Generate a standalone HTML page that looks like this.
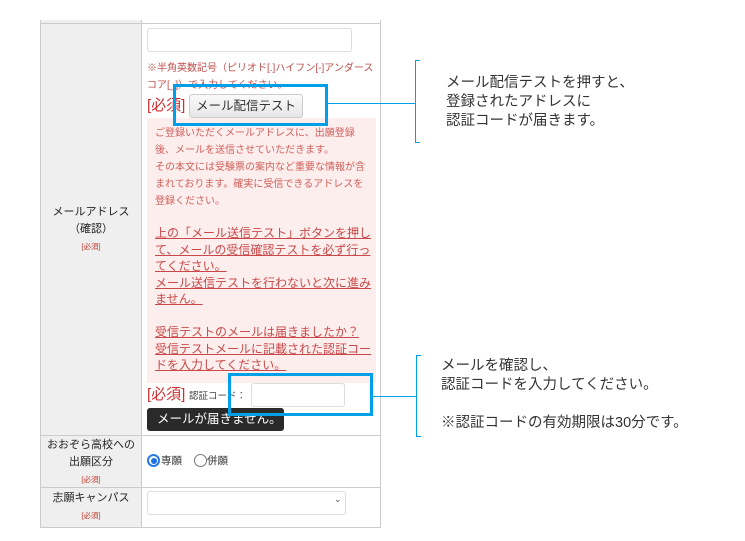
<!DOCTYPE html>
<html><head><meta charset="utf-8"><style>
*{margin:0;padding:0;box-sizing:border-box}
body{width:745px;height:541px;background:#fff;position:relative;overflow:hidden;font-family:"Liberation Sans","Noto Sans CJK JP",sans-serif}
.a{position:absolute}
.red{color:#c0392b}
.u{text-decoration:underline;color:#c9494a}
</style></head><body>
<div class="a" style="left:40px;top:20px;width:102px;height:508px;background:#efefef;border-left:1px solid #ccc;border-right:1px solid #ccc"></div>
<div class="a" style="left:40px;top:23px;width:341px;height:1px;background:#ccc"></div>
<div class="a" style="left:380px;top:20px;width:1px;height:508px;background:#ccc"></div>
<div class="a" style="left:40px;top:435px;width:341px;height:1px;background:#ccc"></div>
<div class="a" style="left:40px;top:487px;width:341px;height:1px;background:#ccc"></div>
<div class="a" style="left:40px;top:527px;width:341px;height:1px;background:#ccc"></div>

<div class="a" style="left:40px;top:204px;width:102px;text-align:center;font-size:11px;line-height:17px;color:#222">メールアドレス<br>（確認）<br><span class="red" style="font-size:7.5px">[必須]</span></div>
<div class="a" style="left:40px;top:437px;width:102px;text-align:center;font-size:11px;line-height:17px;color:#222">おおぞら高校への<br>出願区分<br><span class="red" style="font-size:7.5px">[必須]</span></div>
<div class="a" style="left:40px;top:490px;width:102px;text-align:center;font-size:11px;line-height:17px;color:#222">志願キャンパス<br><span class="red" style="font-size:7.5px">[必須]</span></div>

<div class="a" style="left:147px;top:28px;width:205px;height:24px;border:1px solid #ddd;border-radius:3px"></div>
<div class="a" style="left:147px;top:60px;width:232px;font-size:10px;line-height:17px;color:#c0504d">※半角英数記号（ピリオド[.]ハイフン[-]アンダースコア[_]）で入力してください。</div>
<div class="a red" style="left:147px;top:94px;font-size:15px;color:#d03030">[必須]</div>
<div class="a" style="left:189px;top:94px;width:114px;height:24px;border:1px solid #ccc;border-radius:3px;background:linear-gradient(#fafafa,#e6e6e6);font-size:12.5px;line-height:22px;text-align:center;color:#333">メール配信テスト</div>

<div class="a" style="left:147px;top:118px;width:229px;height:265px;background:#fdeeee"></div>
<div class="a" style="left:155px;top:125px;white-space:nowrap;font-size:10px;line-height:17px;color:#d0605a">ご登録いただくメールアドレスに、出願登録<br>後、メールを送信させていただきます。<br>その本文には受験票の案内など重要な情報が含<br>まれております。確実に受信できるアドレスを<br>登録ください。</div>
<div class="a u" style="left:155px;top:225px;width:220px;font-size:12px;line-height:16.5px">上の「メール送信テスト」ボタンを押して、メールの受信確認テストを必ず行ってください。<br>メール送信テストを行わないと次に進みません。<br><br>受信テストのメールは届きましたか？<br>受信テストメールに記載された認証コードを入力してください。</div>

<div class="a" style="left:147px;top:383px;font-size:15px;color:#d03030">[必須]</div>
<div class="a" style="left:189px;top:388px;font-size:9.5px;color:#444">認証コード：</div>
<div class="a" style="left:251px;top:383px;width:94px;height:24px;border:1px solid #ddd;border-radius:3px"></div>
<div class="a" style="left:147px;top:408px;width:137px;height:23px;background:#2a2a2a;border-radius:3px;color:#fff;font-size:12.5px;line-height:23px;padding-left:10px;white-space:nowrap;overflow:hidden">メールが届きません。</div>

<div class="a" style="left:147px;top:454px;width:13px;height:13px;border:2px solid #2a7ae2;border-radius:50%"><div style="margin:1.5px;width:6px;height:6px;border-radius:50%;background:#1a73e8"></div></div>
<div class="a" style="left:161px;top:453px;font-size:10.5px;color:#333">専願</div>
<div class="a" style="left:194px;top:454px;width:13px;height:13px;border:1px solid #777;border-radius:50%"></div>
<div class="a" style="left:207px;top:453px;font-size:10.5px;color:#333">併願</div>

<div class="a" style="left:147px;top:491px;width:199px;height:24px;border:1px solid #ddd;border-radius:3px"></div>
<div class="a" style="left:334px;top:494px;font-size:9px;color:#555">⌄</div>

<div class="a" style="left:173px;top:84px;width:155px;height:42px;border:3px solid #00a0e9"></div>
<div class="a" style="left:328px;top:103px;width:87px;height:1px;background:#00a0e9"></div>
<div class="a" style="left:415px;top:60px;width:5px;height:83px;border:1px solid #00a0e9;border-right:none"></div>
<div class="a" style="left:446px;top:74px;font-size:14.5px;line-height:19px;color:#333">メール配信テストを押すと、<br>登録されたアドレスに<br>認証コードが届きます。</div>

<div class="a" style="left:228px;top:373px;width:145px;height:43px;border:3px solid #00a0e9"></div>
<div class="a" style="left:373px;top:396px;width:43px;height:1px;background:#00a0e9"></div>
<div class="a" style="left:416px;top:355px;width:5px;height:82px;border:1px solid #00a0e9;border-right:none"></div>
<div class="a" style="left:441px;top:357px;font-size:14.5px;line-height:19px;color:#333">メールを確認し、<br>認証コードを入力してください。<br><br>※認証コードの有効期限は30分です。</div>
</body></html>
